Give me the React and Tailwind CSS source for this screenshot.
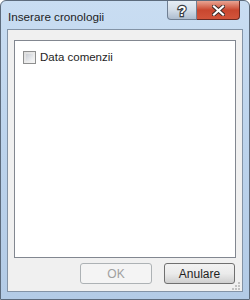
export default function App() {
  return (
    <div className="w-[250px] h-[300px] bg-white" style={{ fontFamily: '"Liberation Sans", "Noto Sans", sans-serif' }}>
      <div className="relative w-[250px] h-[300px] flex flex-col rounded-t-[6px] border border-[#5d6b7c] bg-gradient-to-b from-[#c9ddf2] via-[#bcd3ec] to-[#b3cbe6]">
        {/* Title bar */}
        <div className="h-[28px] flex items-start justify-between pl-[7px] pr-[9px]">
          <span className="mt-[7px] text-[11.7px] text-[#1e1e1e]">Inserare cronologii</span>
          <div className="flex">
            <div className="w-[30px] h-[19px] flex items-center justify-center rounded-bl-[4px] border border-t-0 border-[#6f7f93] bg-gradient-to-b from-[#e6edf5] via-[#d3dde8] to-[#aebdcf]">
              <svg width="14" height="17" viewBox="0 0 14 17">
                <text x="7" y="14" textAnchor="middle" fontSize="14" fontWeight="bold" fontFamily="Liberation Sans, sans-serif" fill="#ffffff" stroke="#3b3f46" strokeWidth="2.4" paintOrder="stroke">?</text>
              </svg>
            </div>
            <div className="w-[43px] h-[19px] flex items-center justify-center rounded-br-[4px] border border-l-0 border-t-0 border-[#6b2a22] bg-gradient-to-b from-[#e8a493] via-[#c9472f] to-[#d2543b]">
              <svg width="13" height="11" viewBox="0 0 13 11">
                <path d="M2 1.5 L11 9.5 M11 1.5 L2 9.5" stroke="#3a2a28" strokeWidth="4" strokeLinecap="square" />
                <path d="M2 1.5 L11 9.5 M11 1.5 L2 9.5" stroke="#ffffff" strokeWidth="2.2" strokeLinecap="square" />
              </svg>
            </div>
          </div>
        </div>
        {/* Client area */}
        <div className="mx-[6px] mb-[7px] flex-1 flex flex-col border border-[#8393a6] bg-[#f0f0f0] px-[6px] pt-[10px] pb-[7px]">
          <div className="flex-1 border border-[#828790] bg-white px-[8px] pt-[8px]">
            <label className="flex items-center gap-[4px] text-[11.5px] text-[#1e1e1e]">
              <span className="w-[13px] h-[13px] border border-[#8e8f8f] bg-gradient-to-br from-[#dcdcdc] to-[#f6f6f6] p-[2px]">
                <span className="block w-full h-full bg-gradient-to-br from-[#cbcfd5] to-[#f5f6f7]" />
              </span>
              Data comenzii
            </label>
          </div>
          <div className="flex justify-end gap-[12px] pt-[5px] pr-[1px]">
            <button className="w-[72px] h-[21px] rounded-[3px] border border-[#adb2b5] bg-[#f4f4f4] text-[12px] text-[#a0a0a0]">OK</button>
            <button className="w-[71px] h-[21px] rounded-[3px] border border-[#707070] bg-gradient-to-b from-[#f2f2f2] via-[#ebebeb] to-[#cfcfcf] text-[12px] text-[#1e1e1e]">Anulare</button>
          </div>
        </div>
        {/* resize grip */}
        <svg className="absolute right-[9px] bottom-[9px]" width="8" height="8" viewBox="0 0 8 8">
          {[[6, 0], [3, 3], [6, 3], [0, 6], [3, 6], [6, 6]].map(([x, y], i) => (
            <rect key={i} x={x} y={y} width="2" height="2" fill="#c2c2c2" />
          ))}
        </svg>
      </div>
    </div>
  );
}
